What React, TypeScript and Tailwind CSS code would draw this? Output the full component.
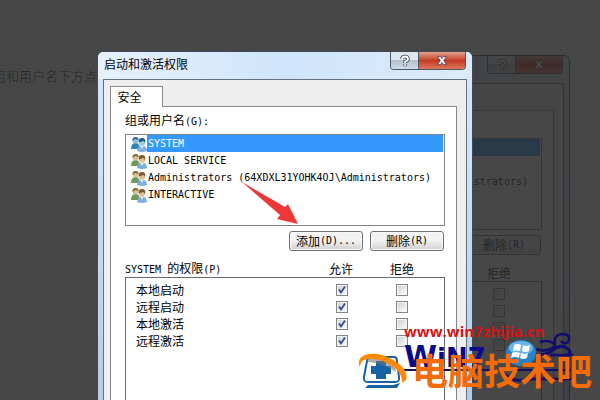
import React from "react";

const users = [
  "SYSTEM",
  "LOCAL SERVICE",
  "Administrators (64XDXL31YOHK4OJ\\Administrators)",
  "INTERACTIVE",
];

const permissions = ["本地启动", "远程启动", "本地激活", "远程激活"];

function Latin({ children }: { children: React.ReactNode }) {
  return (
    <span className="font-['DejaVu_Sans_Mono','Liberation_Mono',monospace] text-[10px]">
      {children}
    </span>
  );
}

function UsersIcon({ selected }: { selected: boolean }) {
  const back = selected ? "#2f86b8" : "#6f9a5c";
  const hair = selected ? "#2a6f9c" : "#8a6a2c";
  return (
    <svg viewBox="0 0 16 16" className="h-4 w-4 shrink-0" aria-hidden="true">
      <path d="M0 13Q0 7 4.500 7Q8 7 8.500 11L8 13Z" fill={back} />
      <circle cx="4.500" cy="4.500" r="3" fill={selected ? "#8cc0dc" : "#d9bf8e"} />
      <path d="M1.500 5Q1 1 4.500 1Q8 1 7.500 4L4 3Z" fill={hair} />
      <path d="M6 15Q6.500 9.500 11 9.500Q15.500 9.500 16 15Q11 17 6 15Z" fill="#79aee0" />
      <path d="M9 9.500L11 13L13 9.500Z" fill="#e4f1fc" />
      <circle cx="11" cy="6.500" r="3.200" fill={selected ? "#9fcbe5" : "#e3c093"} />
      <path d="M7.800 6.500Q7 2 11 2Q15 2 14.200 7L12.500 5Z" fill={selected ? "#245b85" : "#7a5a34"} />
    </svg>
  );
}

function Check({ label, checked }: { label: string; checked: boolean }) {
  return (
    <label className="relative block h-3 w-3">
      <input
        type="checkbox"
        aria-label={label}
        defaultChecked={checked}
        className="peer block h-3 w-3 appearance-none border border-[#858585] bg-linear-to-br from-[#c9ced3] to-white shadow-[inset_0_0_0_1px_#f4f4f4]"
      />
      <svg
        viewBox="0 0 12 12"
        className="pointer-events-none absolute inset-0 hidden h-3 w-3 peer-checked:block"
        aria-hidden="true"
      >
        <path d="M3 5.500L5 8.500L9 2.500" fill="none" stroke="#33488f" strokeWidth="1.800" />
      </svg>
    </label>
  );
}

function PushButton({ text, accel }: { text: string; accel: string }) {
  return (
    <button className="flex h-5 w-[74px] items-center justify-center rounded-[3px] border border-[#707070] bg-linear-to-b from-[#f3f3f3] from-45% to-[#d0d0d0] whitespace-pre shadow-[inset_0_0_0_1px_#fafafa]">
      {text}
      <Latin>{accel}</Latin>
    </button>
  );
}

function PermissionDialog() {
  return (
    <section className="flex h-full w-[376px] flex-col rounded-t-md border border-b-0 border-[#3f4a56] bg-linear-to-b from-[#d6e8fa] from-0% via-[#c9e0f5] via-35% to-[#b4cde8] px-[5px] font-['Noto_Sans_CJK_SC',sans-serif] text-xs leading-4 text-black">
      <header className="-mx-[5px] flex h-[27px] shrink-0 items-start justify-between rounded-t-md bg-linear-to-r from-[#e6f1fb] via-[#cfe5fb] to-[#dcebf9] px-[6px]">
        <h1 className="pt-1">启动和激活权限</h1>
        <div className="flex h-[18px] overflow-hidden rounded-b-[4px] border border-t-0 border-[#4c5866]">
          <button
            aria-label="帮助"
            className="flex w-[28px] items-center justify-center border-r border-[#4c5866] bg-linear-to-b from-[#dde7f0] from-45% via-[#b4c1cd] via-50% to-[#cfdde9]"
          >
            <svg viewBox="0 0 12 14" className="h-[14px] w-3" aria-hidden="true">
              <path d="M3 5Q3 2.500 6 2.500Q9 2.500 9 5Q9 6.500 6.200 7.500V9M6.200 10.300V12.300" fill="none" stroke="#414a56" strokeWidth="3.600" />
              <path d="M3 5Q3 2.500 6 2.500Q9 2.500 9 5Q9 6.500 6.200 7.500V9M6.200 10.300V12" fill="none" stroke="#fff" strokeWidth="1.800" />
            </svg>
          </button>
          <button
            aria-label="关闭"
            className="flex w-[46px] items-center justify-center bg-linear-to-b from-[#e5a08e] from-0% via-[#c33a22] via-50% to-[#e0755a]"
          >
            <svg viewBox="0 0 12 12" className="h-[11px] w-3" aria-hidden="true">
              <path d="M1 1.500H4.300L6 3.700L7.700 1.500H11L7.900 6L11 10.500H7.700L6 8.300L4.300 10.500H1L4.100 6Z" fill="#fff" stroke="#5a4450" strokeWidth="1" />
            </svg>
          </button>
        </div>
      </header>

      <div className="flex min-h-0 flex-1 flex-col border border-b-0 border-[#66717c] bg-[#eeeeee] pt-[6px] pr-[9px] pl-[6px]">
        <div className="relative z-10 -mb-px flex">
          <button className="h-[21px] w-[53px] border border-b-0 border-[#85898f] bg-white pr-[14px] text-center">
            安全
          </button>
        </div>
        <div className="flex min-h-0 flex-1 flex-col border border-b-0 border-[#85898f] bg-white pt-[5px] pr-[11px] pl-[14px]">
          <h2>
            组或用户名<Latin>(G):</Latin>
          </h2>
          <ul className="mt-1 h-[92px] shrink-0 border border-[#7f848b] pr-px pl-[5px]">
            {users.map((user, i) => (
              <li key={user} className="flex h-[17px] items-center">
                <UsersIcon selected={i === 0} />
                <span
                  className={
                    i === 0
                      ? "flex h-[17px] flex-1 items-center bg-[#3399ff] pl-px text-white"
                      : "flex h-[17px] flex-1 items-center pl-px whitespace-nowrap"
                  }
                >
                  <Latin>{user}</Latin>
                </span>
              </li>
            ))}
          </ul>
          <div className="mt-[5px] flex justify-end gap-[7px] pr-px">
            <PushButton text="添加" accel="(D)..." />
            <PushButton text="删除" accel="(R)" />
          </div>

          <div className="mt-[9px] flex min-h-0 flex-1 flex-col">
            <div className="flex h-[17px] shrink-0 items-center pr-[12px]">
              <h2 className="flex-1">
                <Latin>SYSTEM </Latin>的权限<Latin>(P)</Latin>
              </h2>
              <span className="w-[60px] text-center">允许</span>
              <span className="w-[62px] text-center">拒绝</span>
            </div>
            <div className="min-h-0 flex-1 border border-b-0 border-[#66696e] pt-[3px]">
              <table className="w-full border-collapse">
                <tbody>
                  {permissions.map((name) => (
                    <tr key={name} className="h-[17px]">
                      <th scope="row" className="p-0 pl-[10px] text-left font-normal">
                        {name}
                      </th>
                      <td className="w-[60px] p-0">
                        <Check label={name + " 允许"} checked />
                      </td>
                      <td className="w-[48px] p-0">
                        <Check label={name + " 拒绝"} checked={false} />
                      </td>
                    </tr>
                  ))}
                </tbody>
              </table>
            </div>
          </div>
        </div>
      </div>
    </section>
  );
}

function Watermark() {
  return (
    <div className="pointer-events-none absolute top-[322px] left-[356px] h-[72px] w-[242px]">
      <p className="absolute top-[21px] left-[48px] font-['DejaVu_Sans',sans-serif] text-[30px] leading-[28px] font-bold whitespace-nowrap text-[#0a0a8c]">
        W<span className="text-[26px]">iN7</span>
      </p>
      <svg viewBox="0 0 242 72" className="absolute inset-0 h-full w-full" aria-hidden="true">
        <path d="M48 48H216" fill="none" stroke="#10106c" strokeWidth="2" />
        <path d="M178 32Q188 34 196 29Q205 21 212 27Q217 31 210 33" fill="none" stroke="#10106c" strokeWidth="3" />
        <path d="M180 27Q191 31 199 24Q197 12 207 12Q216 13 212 20Q208 23 205 19M184 20Q194 17 199 23M194 33H216V57H190" fill="none" stroke="#10106c" strokeWidth="2.500" />
        <path d="M146 50Q156 62 175 57H194" fill="none" stroke="#10106c" strokeWidth="3" />
        <ellipse cx="165" cy="31" rx="15" ry="13" fill="#2482c9" />
        <ellipse cx="165" cy="26" rx="12" ry="7" fill="#69b5e6" />
        <path d="M158 23Q162 21 165 23L164 29Q160 28 157 29ZM167 23Q170 25 174 23L173 29Q169 31 166 29ZM156 31Q160 29 164 31L163 36Q159 34 155 36ZM165 31Q169 33 172 31L171 36Q167 38 164 36Z" fill="#fff" />
      </svg>
      <p className="absolute top-0 left-[48px] font-['Open_Sans',sans-serif] text-[15px] leading-[18px] font-bold text-[#d51313]">
        www.win7zhijia.cn
      </p>
      <svg viewBox="0 0 54 40" className="absolute top-[29px] left-px h-10 w-[54px]" aria-hidden="true">
        <path d="M14 6H37Q40 6 40 10L42 26Q43 31 38 31H11Q6 31 7 26L10 10Q11 6 14 6Z" fill="#fff" stroke="#1762a5" strokeWidth="2" />
        <path d="M11 34H36L43 32L40 37H8Z" fill="#1762a5" />
        <path d="M19 10H29V15H34V23H29V28H19V23H14V15H19Z" fill="#1762a5" />
        <path d="M12 7Q25 6 38 16L39 21Q26 12 11 11Z" fill="#777" opacity="0.6" />
        <path d="M3 16Q-1 8 8 4Q20-1 38 10Q52 19 49 29L45 32Q46 22 34 14Q18 5 7 9Q3 11 3 16Z" fill="#ff8a00" />
      </svg>
      <strong className="absolute top-[27px] left-[56px] font-['Noto_Sans_CJK_SC',sans-serif] text-[36px] leading-10 font-bold whitespace-nowrap text-[#f36c08]">
        电脑技术吧
      </strong>
    </div>
  );
}

export default function App() {
  return (
    <main className="relative h-screen overflow-hidden bg-white">
      <p className="-ml-[7px] pt-[66px] font-['Noto_Sans_CJK_SC',sans-serif] text-[13px] leading-5 font-light whitespace-nowrap text-black/50">
        组和用户名下方点
      </p>
      <div className="absolute top-[55px] bottom-0 left-[194px] opacity-50" inert>
        <PermissionDialog />
      </div>
      <div className="absolute inset-0 bg-black/72" />
      <div className="absolute top-[51px] bottom-0 left-[97px]">
        <PermissionDialog />
      </div>
      <svg
        viewBox="0 0 58 44"
        className="pointer-events-none absolute top-[181px] left-[241px] h-11 w-[58px]"
        aria-hidden="true"
      >
        <path d="M1 1L44 26L47 23L57 43L36 38L39 34Z" fill="#ee3838" />
      </svg>
      <Watermark />
    </main>
  );
}
